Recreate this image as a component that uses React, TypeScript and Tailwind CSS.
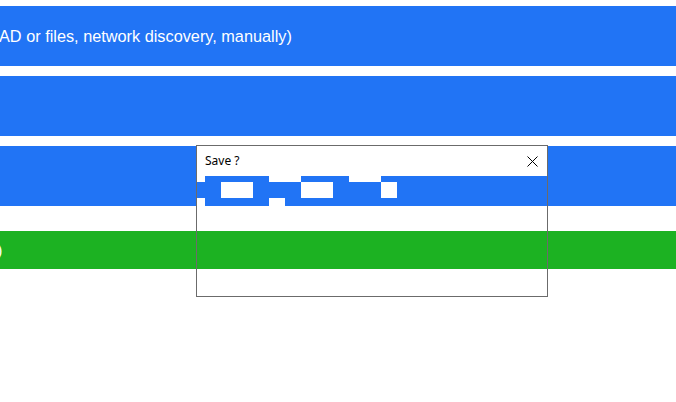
import React from "react";

export default function App() {
  const blocks = [
    "left-0 top-[30px] w-[8px] h-[6px]",
    "left-[72px] top-[30px] w-[32px] h-[6px]",
    "left-[152px] top-[30px] w-[32px] h-[6px]",
    "left-[24px] top-[36px] w-[32px] h-[16px]",
    "left-[104px] top-[36px] w-[32px] h-[16px]",
    "left-[184px] top-[36px] w-[16px] h-[16px]",
    "left-0 top-[52px] w-[8px] h-[8px]",
    "left-[72px] top-[52px] w-[16px] h-[8px]",
  ];
  return (
    <div className="relative w-[676px] h-[402px] bg-white overflow-hidden font-['Liberation_Sans',Arial,sans-serif]">
      <div className="flex flex-col pt-[6px]">
        <div className="h-[60px] bg-[#2174f5] flex items-center text-white text-[16.3px] whitespace-nowrap">
          <span className="-ml-[1px]">AD or files, network discovery, manually)</span>
        </div>
        <div className="mt-[10px] h-[60px] bg-[#2174f5]" />
        <div className="mt-[10px] h-[60px] bg-[#2174f5]" />
        <div className="mt-[25px] h-[38px] bg-[#1cb222] flex items-center text-white text-[16.3px] whitespace-nowrap">
          <span className="-ml-[3px]">)</span>
        </div>
      </div>

      <div className="absolute left-[196px] top-[145px] w-[352px] h-[152px] border border-[#6b6b6b]">
        <div className="h-[30px] bg-white flex items-center justify-between pl-[8px] pr-[9px]">
          <span className="text-[12px] text-black font-['Noto_Sans',sans-serif]">Save ?</span>
          <svg width="11" height="11" viewBox="0 0 11 11" className="block">
            <path d="M0.5 0.5 L10.5 10.5 M10.5 0.5 L0.5 10.5" stroke="#000" strokeWidth="1" />
          </svg>
        </div>
        {blocks.map((c, i) => (
          <div key={i} className={`absolute bg-white ${c}`} />
        ))}
      </div>
    </div>
  );
}
